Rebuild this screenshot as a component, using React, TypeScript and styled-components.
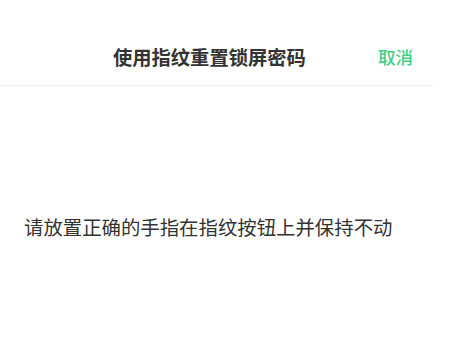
import React from "react";
import styled, { createGlobalStyle } from "styled-components";

const Global = createGlobalStyle`
  html, body { margin: 0; padding: 0; background: #ffffff; }
  body { font-family: "Noto Sans CJK SC", "Noto Sans", sans-serif; }
`;

const Page = styled.div`
  width: 455px;
  height: 347px;
  background: #ffffff;
  display: flex;
  flex-direction: column;
`;

const Header = styled.header`
  width: 433px;
  height: 86px;
  box-sizing: border-box;
  border-bottom: 1px solid #f1f1f1;
  display: flex;
  align-items: flex-start;
  justify-content: space-between;
  padding: 44px 20px 0 113px;
`;

const Title = styled.h1`
  margin: 0;
  font-size: 19.3px;
  line-height: 26px;
  font-weight: 700;
  color: #333333;
`;

const Cancel = styled.button`
  border: none;
  background: none;
  padding: 0;
  margin-top: 1px;
  font-family: inherit;
  font-size: 17.5px;
  line-height: 24px;
  font-weight: 500;
  color: #3ccf88;
  cursor: pointer;
`;

const Body = styled.main`
  padding: 129px 0 0 24px;
`;

const Hint = styled.p`
  margin: 0;
  font-size: 19.4px;
  line-height: 24px;
  color: #333333;
  white-space: nowrap;
`;

export default function App() {
  return (
    <>
      <Global />
      <Page>
        <Header>
          <Title>使用指纹重置锁屏密码</Title>
          <Cancel>取消</Cancel>
        </Header>
        <Body>
          <Hint>请放置正确的手指在指纹按钮上并保持不动</Hint>
        </Body>
      </Page>
    </>
  );
}
